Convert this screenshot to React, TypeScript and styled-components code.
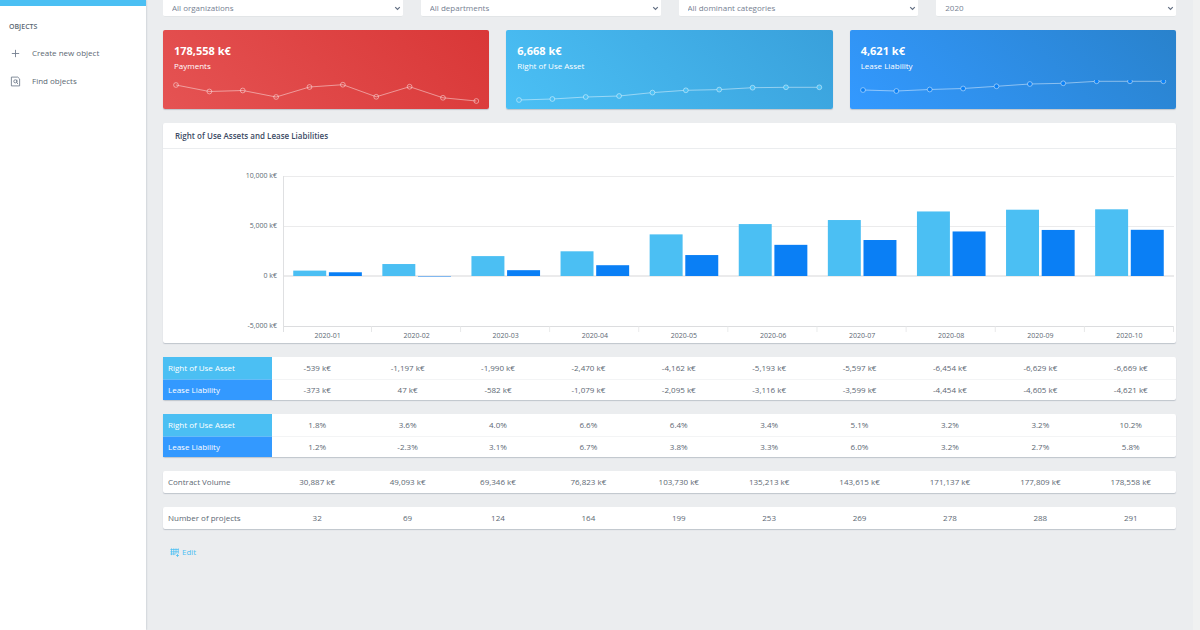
import React from 'react';
import styled, { createGlobalStyle } from 'styled-components';

const GlobalStyle = createGlobalStyle`
  *, *::before, *::after { box-sizing: border-box; }
  body {
    margin: 0;
    background: #ebedef;
    color: #5c6873;
    font: 8px/12px "Open Sans", "Noto Sans", sans-serif;
  }
`;

const Page = styled.div`
  display: flex;
  min-height: 100vh;
`;

const Sidebar = styled.nav`
  flex: 0 0 146px;
  background: #fff;
  border-top: 6px solid #4bbff3;
  box-shadow: 0 0 2px rgba(60, 75, 100, 0.35);
`;

const SidebarTitle = styled.h2`
  margin: 15px 0 0;
  padding: 0 9px;
  font-size: 7px;
  line-height: 12px;
  font-weight: 600;
  text-transform: uppercase;
`;

const SidebarLink = styled.a`
  display: flex;
  align-items: center;
  gap: 11px;
  height: 28px;
  padding-left: 10px;
  color: inherit;
  text-decoration: none;

  svg { width: 11px; height: 11px; }
`;

const SidebarLinks = styled.div`
  padding-top: 6px;
`;

const Main = styled.main`
  flex: 1;
  min-width: 0;
  padding: 0 17px;
  border-right: 7px solid #f0f1f1;
  display: flex;
  flex-direction: column;
`;

const Filters = styled.div`
  display: grid;
  grid-template-columns: repeat(4, 1fr);
  gap: 18px;
`;

const Filter = styled.label`
  display: flex;
  align-items: center;
  height: 17px;
  padding-right: 2px;
  background: #fff;
  border-bottom: 1px solid #e2e5e7;
  border-radius: 0 0 2px 2px;

  svg { flex: none; width: 7px; height: 7px; margin-left: -9px; pointer-events: none; }
`;

const FilterSelect = styled.select`
  flex: 1;
  min-width: 0;
  appearance: none;
  border: 0;
  padding: 0 9px;
  background: transparent;
  color: #768192;
  font: inherit;
`;

const Stats = styled.div`
  display: grid;
  grid-template-columns: repeat(3, 1fr);
  gap: 17px;
  margin: 13px 0 14px;
`;

const StatCard = styled.section<{ $from: string; $to: string }>`
  height: 79px;
  padding: 13px 13px 0;
  border-radius: 2px;
  color: #fff;
  background: linear-gradient(45deg, ${p => p.$from}, ${p => p.$to});
  box-shadow: 0 1px 1px rgba(60, 75, 100, 0.25);
`;

const StatValue = styled.div`
  margin-left: -2px;
  font-size: 11px;
  line-height: 16px;
  font-weight: 700;
`;

const StatLabel = styled.div`
  margin-left: -2px;
  line-height: 14px;
`;

const Sparkline = styled.svg`
  display: block;
  width: 100%;
  height: 24px;
  margin-top: 7px;
  overflow: visible;
  clip-path: inset(0 -4px);
`;

const Panel = styled.section`
  background: #fff;
  border-radius: 2px;
  box-shadow: 0 1px 1px rgba(60, 75, 100, 0.25);
`;

const PanelTitle = styled.h1`
  margin: 0;
  padding: 7px 12px 6px;
  border-bottom: 1px solid #ebedef;
  color: #3c4b64;
  font-size: 8px;
  line-height: 12px;
  font-weight: 600;
`;

const Chart = styled.div`
  display: flex;
  height: 194px;
  padding-right: 2px;
  font-size: 7px;

  text { fill: #5c6873; }
`;

const ChartAxis = styled.svg`
  flex: 0 0 120px;
  height: 194px;
`;

const ChartPlot = styled.svg`
  flex: 1;
  min-width: 0;
  height: 194px;
`;

const DataTable = styled.table`
  width: 100%;
  margin-top: 14px;
  table-layout: fixed;
  border-spacing: 0;
  background: #fff;
  border-radius: 2px;
  box-shadow: 0 1px 1px rgba(60, 75, 100, 0.25);
`;

const DataCell = styled.td`
  height: 22px;
  padding: 0;
  text-align: center;

  tr + tr > & { height: 21px; border-top: 1px solid #f3f4f5; }
`;

const RowLabel = styled.th<{ $fill?: string }>`
  width: 109px;
  height: 22px;
  padding: 0 5px;
  font-weight: 400;
  text-align: left;
  color: ${p => (p.$fill ? '#fff' : 'inherit')};
  background: ${p => p.$fill ?? 'transparent'};

  tr + tr > & { height: 21px; border-top: 1px solid #66bcf8; }
`;

const EditButton = styled.button`
  display: flex;
  align-items: center;
  align-self: flex-start;
  gap: 3px;
  margin: 17px 0 0 7px;
  padding: 0;
  border: 0;
  background: none;
  color: #4bbff3;
  font: inherit;
  cursor: pointer;

  svg { width: 9px; height: 9px; }
`;

const PlusIcon = () => (
  <svg viewBox="0 0 12 12" fill="none" stroke="#768192" aria-hidden="true">
    <path d="M6 2v8M2 6h8" />
  </svg>
);

const FindIcon = () => (
  <svg viewBox="0 0 12 12" fill="none" stroke="#687485" strokeWidth="0.9" aria-hidden="true">
    <path d="M1.5 1.2h7l2 2v7.6h-9z" />
    <circle cx="5.8" cy="5.8" r="1.7" />
    <path d="M7.5 4v3.4l1.2 1.4" />
  </svg>
);

const ChevronIcon = () => (
  <svg viewBox="0 0 8 8" fill="none" stroke="#636f83" strokeWidth="1.4" aria-hidden="true">
    <path d="M1.4 2.4L4 5l2.6-2.6" />
  </svg>
);

const GridIcon = () => (
  <svg viewBox="0 0 12 12" fill="none" stroke="currentColor" aria-hidden="true">
    <path d="M.5 2h11M.5 5h11M.5 8h7M2 .5v9M5 .5v9M8 .5v7M11 .5v7M10 8v4M8 10h4" />
  </svg>
);

const filters = [
  { label: 'Organization', value: 'All organizations' },
  { label: 'Department', value: 'All departments' },
  { label: 'Dominant category', value: 'All dominant categories' },
  { label: 'Year', value: '2020' },
];

const stats = [
  { value: '178,558 k€', label: 'Payments', from: '#e55353', to: '#d93737', dot: 'none', points: [5, 11.5, 10.5, 17, 7, 4.7, 16.8, 6.7, 17.8, 21] },
  { value: '6,668 k€', label: 'Right of Use Asset', from: '#4bc0f5', to: '#39a0db', dot: '#4bc0f5', points: [20, 19, 17, 16, 12.6, 10.3, 9.6, 7.7, 7.3, 7.3] },
  { value: '4,621 k€', label: 'Lease Liability', from: '#3399ff', to: '#2982cc', dot: '#0a80f5', points: [10, 11, 9.5, 8.5, 6.3, 4, 3.3, 1.3, 1.3, 1.3] },
];

const asset = [539, 1197, 1990, 2470, 4162, 5193, 5597, 6454, 6629, 6669];
const liability = [373, -47, 582, 1079, 2095, 3116, 3599, 4454, 4605, 4621];
const months = asset.map((_, i) => `2020-${String(i + 1).padStart(2, '0')}`);
const money = (n: number) => `${n.toLocaleString('en-US')} k€`;

const ZERO_Y = 127;
const UNITS_PER_PIXEL = 100;

const tables = [
  [
    { label: 'Right of Use Asset', fill: '#4bbff3', cells: asset.map(n => money(-n)) },
    { label: 'Lease Liability', fill: '#3399ff', cells: liability.map(n => money(-n)) },
  ],
  [
    { label: 'Right of Use Asset', fill: '#4bbff3', cells: ['1.8%', '3.6%', '4.0%', '6.6%', '6.4%', '3.4%', '5.1%', '3.2%', '3.2%', '10.2%'] },
    { label: 'Lease Liability', fill: '#3399ff', cells: ['1.2%', '-2.3%', '3.1%', '6.7%', '3.8%', '3.3%', '6.0%', '3.2%', '2.7%', '5.8%'] },
  ],
  [{ label: 'Contract Volume', fill: undefined, cells: [30887, 49093, 69346, 76823, 103730, 135213, 143615, 171137, 177809, 178558].map(money) }],
  [{ label: 'Number of projects', fill: undefined, cells: ['32', '69', '124', '164', '199', '253', '269', '278', '288', '291'] }],
];

const Bar = ({ x, value, fill }: { x: string; value: number; fill: string }) => {
  const height = Math.abs(value) / UNITS_PER_PIXEL;
  return <rect x={x} y={value > 0 ? ZERO_Y - height : ZERO_Y} width="37%" height={height} fill={fill} />;
};

export default function App() {
  return (
    <>
      <GlobalStyle />
      <Page>
        <Sidebar>
          <SidebarTitle>Objects</SidebarTitle>
          <SidebarLinks>
            <SidebarLink href="#create"><PlusIcon />Create new object</SidebarLink>
            <SidebarLink href="#find"><FindIcon />Find objects</SidebarLink>
          </SidebarLinks>
        </Sidebar>
        <Main>
          <Filters>
            {filters.map(f => (
              <Filter key={f.label}>
                <FilterSelect aria-label={f.label}>
                  <option>{f.value}</option>
                </FilterSelect>
                <ChevronIcon />
              </Filter>
            ))}
          </Filters>
          <Stats>
            {stats.map(s => (
              <StatCard key={s.label} $from={s.from} $to={s.to}>
                <StatValue>{s.value}</StatValue>
                <StatLabel>{s.label}</StatLabel>
                <Sparkline stroke="rgba(255,255,255,0.45)" aria-hidden="true">
                  {s.points.slice(1).map((y, i) => (
                    <line key={i} x1={`${(i * 100) / 9}%`} y1={s.points[i]} x2={`${((i + 1) * 100) / 9}%`} y2={y} />
                  ))}
                  {s.points.map((y, i) => (
                    <circle key={i} cx={`${(i * 100) / 9}%`} cy={y} r="2.4" fill={s.dot} />
                  ))}
                </Sparkline>
              </StatCard>
            ))}
          </Stats>
          <Panel>
            <PanelTitle>Right of Use Assets and Lease Liabilities</PanelTitle>
            <Chart>
              <ChartAxis>
                {[10000, 5000, 0, -5000].map((n, i) => (
                  <text key={n} x="114" y={29 + i * 50} textAnchor="end">{money(n)}</text>
                ))}
              </ChartAxis>
              <ChartPlot>
                <g fill="#ebebec">
                  <rect y="27" width="100%" height="1" />
                  <rect y="77" width="100%" height="1" />
                  <rect y="126" width="100%" height="2" />
                  <rect y="177" width="100%" height="1" fill="#dcdddf" />
                  <rect y="27" width="1" height="156" fill="#dfe0e2" />
                </g>
                {months.map((month, i) => (
                  <svg key={month} x={`${i * 10}%`} width="10%" height="194">
                    <rect x="100%" y="177" width="1" height="6" fill="#e4e5e6" transform="translate(-1 0)" />
                    <Bar x="11.5%" value={asset[i]} fill="#4bbff3" />
                    <Bar x="51.5%" value={liability[i]} fill="#0a7ff5" />
                    <text x="50%" y="189" textAnchor="middle">{month}</text>
                  </svg>
                ))}
              </ChartPlot>
            </Chart>
          </Panel>
          {tables.map((rows, t) => (
            <DataTable key={t}>
              <tbody>
                {rows.map(row => (
                  <tr key={row.label}>
                    <RowLabel scope="row" $fill={row.fill}>{row.label}</RowLabel>
                    {row.cells.map((cell, i) => <DataCell key={i}>{cell}</DataCell>)}
                  </tr>
                ))}
              </tbody>
            </DataTable>
          ))}
          <EditButton type="button"><GridIcon />Edit</EditButton>
        </Main>
      </Page>
    </>
  );
}
